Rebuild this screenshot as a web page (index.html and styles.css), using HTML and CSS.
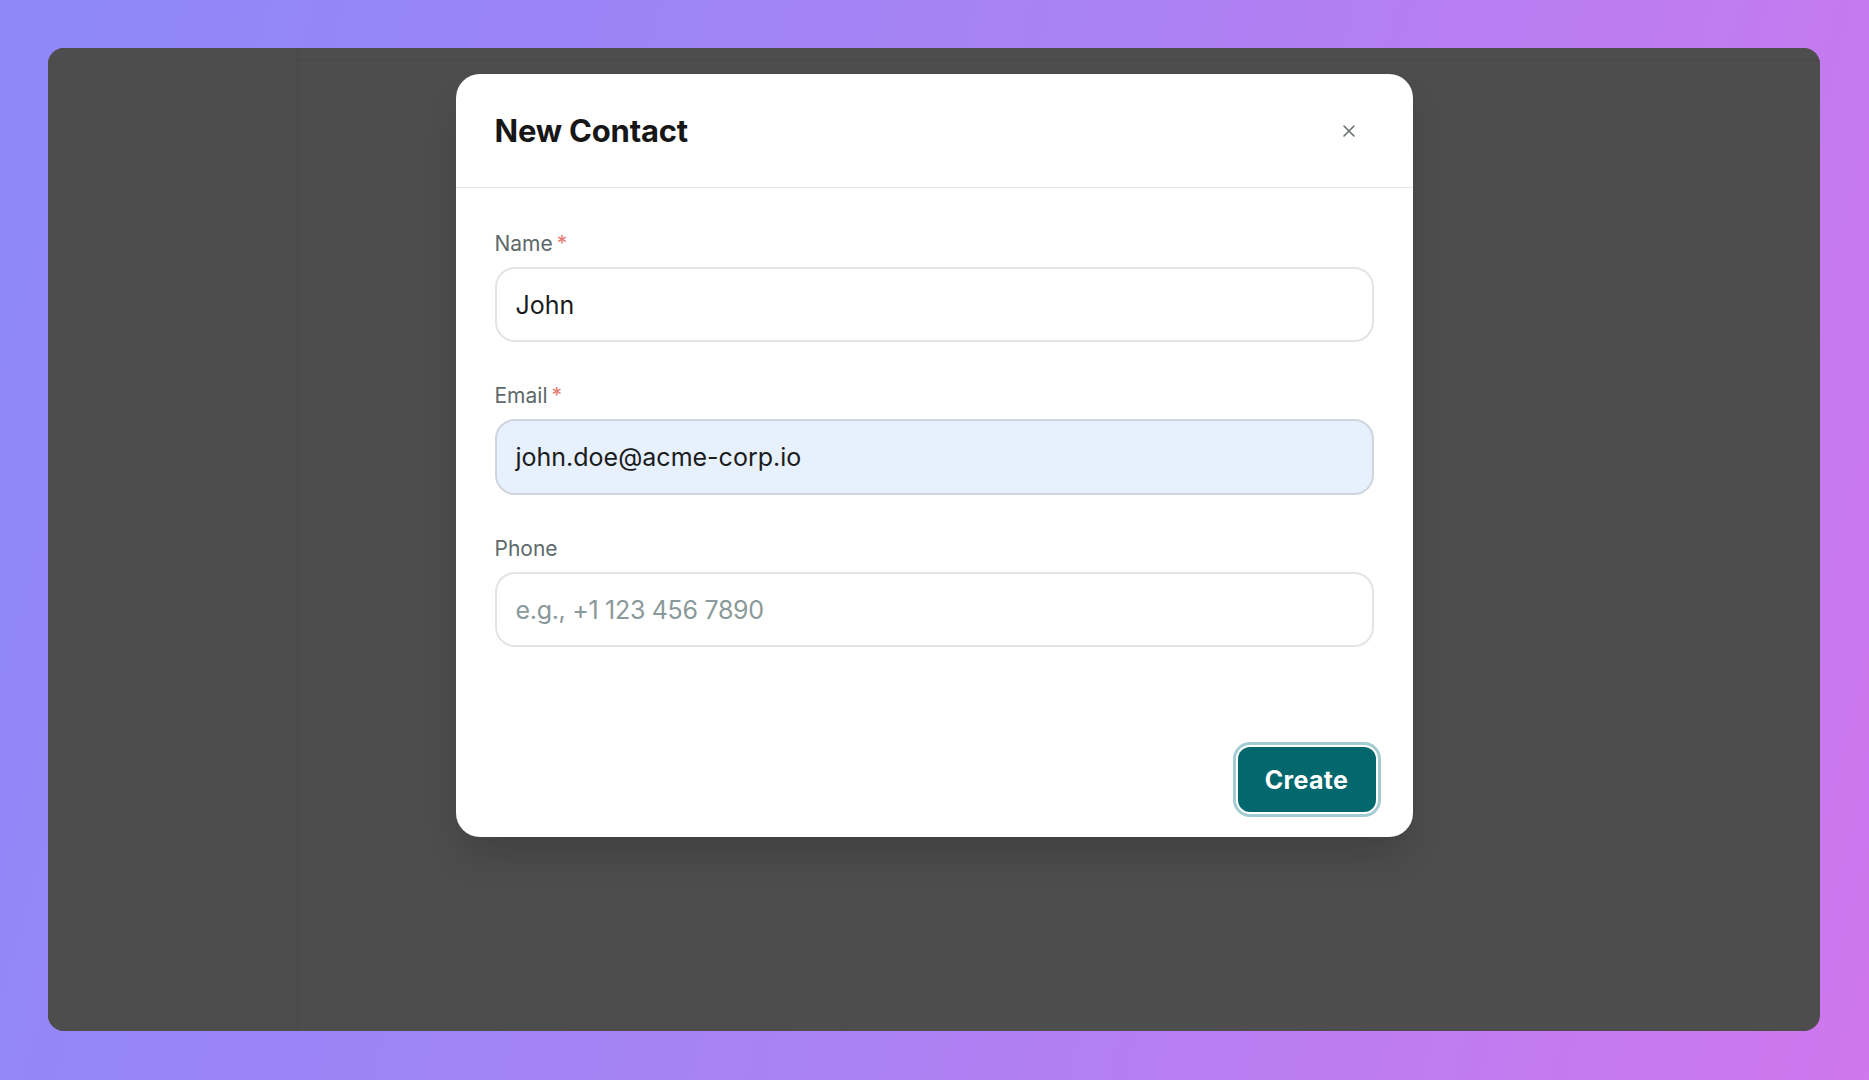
FILE: index.html
```html
<!DOCTYPE html>
<html lang="en">
<head>
<meta charset="utf-8">
<title>New Contact</title>
<link rel="stylesheet" href="styles.css">
</head>
<body>
<div class="frame">
  <div class="app">
    <aside class="sidebar"></aside>
    <main class="main">
      <div class="topbar"></div>
    </main>
    <div class="overlay">
      <section class="modal">
        <header class="modal-header">
          <h1 class="modal-title">New Contact</h1>
          <button class="close-btn" aria-label="Close">
            <svg width="14" height="14" viewBox="0 0 14 14"><path d="M2 2 L12 12 M12 2 L2 12" stroke="#66706f" stroke-width="1.6" stroke-linecap="round" fill="none"/></svg>
          </button>
        </header>
        <div class="modal-body">
          <div class="field">
            <label class="label">Name<span class="req">*</span></label>
            <div class="input">John</div>
          </div>
          <div class="field">
            <label class="label">Email<span class="req">*</span></label>
            <div class="input input-filled">john.doe@acme-corp.io</div>
          </div>
          <div class="field">
            <label class="label">Phone</label>
            <div class="input placeholder">e.g., +1 123 456 7890</div>
          </div>
        </div>
        <footer class="modal-footer">
          <button class="create-btn">Create</button>
        </footer>
      </section>
    </div>
  </div>
</div>
</body>
</html>
```

FILE: styles.css
```css
* { box-sizing: border-box; }
html, body { margin: 0; padding: 0; }
body {
  width: 1869px;
  height: 1080px;
  overflow: hidden;
  font-family: Inter, "Noto Sans", "Liberation Sans", sans-serif;
}
.frame {
  width: 100%;
  height: 100%;
  padding: 48px 49px 49px 48px;
  background: linear-gradient(105deg, #8c88f9 0%, #a982f4 50%, #cf77ed 100%);
}
.app {
  position: relative;
  width: 100%;
  height: 100%;
  border-radius: 16px;
  background: #4d4d4d;
  display: flex;
  overflow: hidden;
}
.sidebar {
  width: 250px;
  flex: none;
  border-right: 1px solid #464646;
  background: #4d4d4d;
}
.main { flex: 1; }
.topbar {
  height: 13px;
  border-bottom: 1px solid #474747;
}
.overlay {
  position: absolute;
  inset: 0;
  display: flex;
  justify-content: center;
  align-items: flex-start;
  padding-top: 26px;
}
.modal {
  width: 957px;
  height: 763px;
  background: #fff;
  border-radius: 24px;
  box-shadow: 0 24px 40px -8px rgba(0,0,0,0.18);
  display: flex;
  flex-direction: column;
}
.modal-header {
  height: 114px;
  padding: 0 57px 0 39px;
  display: flex;
  align-items: center;
  justify-content: space-between;
  border-bottom: 1px solid #e6e6e6;
}
.modal-title {
  margin: 0;
  font-size: 31px;
  font-weight: 700;
  color: #161716;
  letter-spacing: -0.2px;
}
.close-btn {
  border: 0;
  background: none;
  padding: 0;
  width: 14px;
  height: 14px;
  display: flex;
}
.modal-body {
  padding: 41px 39px 0 39px;
  display: flex;
  flex-direction: column;
  gap: 39px;
}
.field {
  display: flex;
  flex-direction: column;
  gap: 8px;
}
.label {
  font-size: 21px;
  line-height: 30px;
  color: #5d696a;
}
.req {
  color: #e8766c;
  margin-left: 4px;
}
.input {
  height: 75px;
  border: 2px solid #e3e4e4;
  border-radius: 20px;
  padding: 0 19px;
  display: flex;
  align-items: center;
  font-size: 25px;
  color: #1b1c1c;
  background: #fff;
}
.input-filled {
  background: #e7f0fd;
  border-color: #cfd5dc;
  height: 76px;
}
.placeholder { color: #8a999a; letter-spacing: -0.3px; }
.modal-footer {
  margin-top: auto;
  padding: 0 37px 25px 0;
  display: flex;
  justify-content: flex-end;
}
.create-btn {
  width: 138px;
  height: 65px;
  border: 0;
  border-radius: 12px;
  background: #03676e;
  color: #fff;
  font-family: inherit;
  font-size: 25px;
  font-weight: 700;
  letter-spacing: 0.3px;
  box-shadow: 0 0 0 2px #fff, 0 0 0 5px #a2ccd2;
}
```
